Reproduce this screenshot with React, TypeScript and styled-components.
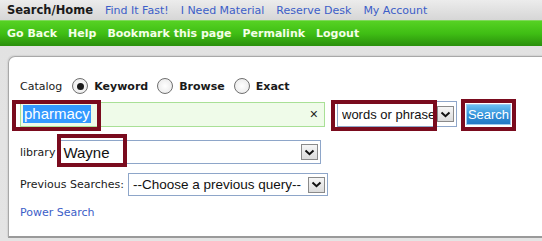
import React from 'react';
import styled, { createGlobalStyle } from 'styled-components';

const GlobalStyle = createGlobalStyle`
  html, body {
    margin: 0;
    padding: 0;
    background: #ffffff;
    overflow: hidden;
  }
  body {
    font-family: "DejaVu Sans", Verdana, sans-serif;
  }
`;

const Page = styled.div`
  width: 542px;
  height: 241px;
  overflow: hidden;
  background: linear-gradient(#e9e9e9, #e2e2e2 40px, #e4e4e4);
`;

const TopBar = styled.div`
  display: flex;
  align-items: center;
  gap: 12px;
  height: 20px;
  padding-left: 7px;
  background: linear-gradient(#ececec, #d6d6d6);
  font-size: 11px;
`;

const TopLink = styled.a<{ $active?: boolean }>`
  color: ${(p) => (p.$active ? '#1a1a1a' : '#3c5ec8')};
  font-weight: ${(p) => (p.$active ? 'bold' : 'normal')};
  font-size: ${(p) => (p.$active ? '11.5px' : '11px')};
  text-decoration: none;
`;

const GreenBar = styled.div`
  display: flex;
  align-items: center;
  gap: 11px;
  height: 26px;
  padding-left: 7px;
  background: linear-gradient(#56d223, #3fbe14 50%, #2a8f0c);
  border-top: 1px solid #7ed85a;
  box-sizing: border-box;
`;

const GreenLink = styled.a`
  color: #f4ffe6;
  font-weight: bold;
  font-size: 11px;
  text-decoration: none;
`;

const Panel = styled.div`
  position: relative;
  margin: 10px 0 0 8px;
  width: 560px;
  height: 182px;
  box-sizing: border-box;
  background: #ffffff;
  border: 1px solid #a8a8a8;
  border-bottom: 2px solid #9a9a9a;
  border-radius: 7px 0 0 0;
  box-shadow: -1px -1px 1px #d4d4d4;
  padding: 21px 0 0 11px;
  font-size: 11px;
  color: #1a1a1a;
`;

const Row = styled.div<{ $top?: number; $left?: number }>`
  display: flex;
  align-items: center;
  margin-top: ${(p) => p.$top ?? 0}px;
  margin-left: ${(p) => p.$left ?? 0}px;
`;

const Label = styled.span<{ $right?: number }>`
  margin-right: ${(p) => p.$right ?? 0}px;
`;

const Radio = styled.span<{ $checked?: boolean }>`
  position: relative;
  width: 14px;
  height: 14px;
  border-radius: 50%;
  border: 1px solid #6f6f6f;
  background: radial-gradient(#ffffff, #e6e6e6);
  margin-right: 6px;
  flex: none;
  &::after {
    content: '';
    display: ${(p) => (p.$checked ? 'block' : 'none')};
    position: absolute;
    left: 3.5px;
    top: 3.5px;
    width: 7px;
    height: 7px;
    border-radius: 50%;
    background: #1a1a1a;
  }
`;

const RadioLabel = styled.span`
  font-weight: bold;
  font-size: 11px;
  margin-right: 9px;
`;

const SearchInput = styled.div`
  position: relative;
  display: flex;
  align-items: center;
  width: 305px;
  height: 25px;
  box-sizing: border-box;
  border: 1px solid #a9e096;
  background: #effbe9;
  padding-left: 2px;
  font-family: "Liberation Sans", Arial, sans-serif;
  font-size: 15px;
`;

const Selected = styled.span`
  background: #3399ff;
  color: #ffffff;
  padding: 0 1px;
  line-height: 18px;
`;

const Clear = styled.span`
  margin-left: auto;
  margin-right: 6px;
  font-size: 14px;
  color: #222;
`;

const Select = styled.div<{ $width: number; $height: number; $size: number }>`
  position: relative;
  display: flex;
  align-items: center;
  width: ${(p) => p.$width}px;
  height: ${(p) => p.$height}px;
  box-sizing: border-box;
  border: 1px solid #8ea6c9;
  background: #ffffff;
  padding-left: 4px;
  padding-right: 2px;
  font-family: "Liberation Sans", Arial, sans-serif;
  font-size: ${(p) => p.$size}px;
  color: #111;
  flex: none;
`;

const SelectText = styled.span`
  flex: 1;
  white-space: nowrap;
  overflow: hidden;
`;

const Arrow = styled.span`
  display: flex;
  align-items: center;
  justify-content: center;
  width: 17px;
  height: 16px;
  box-sizing: border-box;
  border: 1px solid #8a8a8a;
  background: linear-gradient(#f6f6f6, #dcdcdc);
  flex: none;
`;

const SearchButton = styled.span`
  display: flex;
  align-items: center;
  justify-content: center;
  width: 45px;
  height: 21px;
  box-sizing: border-box;
  border: 1px solid #9ccbf0;
  background: linear-gradient(#6cc0f2, #2f8fd8 55%, #2378c4);
  color: #ffffff;
  font-family: "Liberation Sans", Arial, sans-serif;
  font-size: 13px;
`;

const Highlight = styled.span`
  position: absolute;
  border: 4px solid #7a0b1e;
  box-sizing: border-box;
  pointer-events: none;
`;

const PowerLink = styled.a`
  color: #3c5ec8;
  text-decoration: none;
  font-size: 11px;
`;

function Chevron(): JSX.Element {
  return (
    <svg width="11" height="7" viewBox="0 0 11 7">
      <path d="M1.5 1.5 L5.5 5.2 L9.5 1.5" fill="none" stroke="#111" strokeWidth="2" />
    </svg>
  );
}

export default function App(): JSX.Element {
  return (
    <Page>
      <GlobalStyle />
      <TopBar>
        <TopLink $active>Search/Home</TopLink>
        <TopLink>Find It Fast!</TopLink>
        <TopLink>I Need Material</TopLink>
        <TopLink>Reserve Desk</TopLink>
        <TopLink>My Account</TopLink>
      </TopBar>
      <GreenBar>
        <GreenLink>Go Back</GreenLink>
        <GreenLink>Help</GreenLink>
        <GreenLink>Bookmark this page</GreenLink>
        <GreenLink>Permalink</GreenLink>
        <GreenLink>Logout</GreenLink>
      </GreenBar>
      <Panel>
        <Row>
          <Label $right={10}>Catalog</Label>
          <Radio $checked />
          <RadioLabel>Keyword</RadioLabel>
          <Radio />
          <RadioLabel>Browse</RadioLabel>
          <Radio />
          <RadioLabel>Exact</RadioLabel>
        </Row>
        <Row $top={7}>
          <SearchInput>
            <Selected>pharmacy</Selected>
            <Clear>×</Clear>
          </SearchInput>
          <Row $left={12}>
            <Select $width={120} $height={26} $size={13}>
              <SelectText>words or phrase</SelectText>
              <Arrow>
                <Chevron />
              </Arrow>
            </Select>
          </Row>
          <Row $left={9}>
            <SearchButton>Search</SearchButton>
          </Row>
        </Row>
        <Row $top={13}>
          <Label $right={3}>library</Label>
          <Select $width={263} $height={24} $size={15}>
            <SelectText>Wayne</SelectText>
            <Arrow>
              <Chevron />
            </Arrow>
          </Select>
        </Row>
        <Row $top={9}>
          <Label $right={4}>Previous Searches:</Label>
          <Select $width={200} $height={23} $size={13.5}>
            <SelectText>--Choose a previous query--</SelectText>
            <Arrow>
              <Chevron />
            </Arrow>
          </Select>
        </Row>
        <Row $top={10}>
          <PowerLink>Power Search</PowerLink>
        </Row>
        <Highlight style={{ left: 3, top: 43, width: 89, height: 31 }} />
        <Highlight style={{ left: 322, top: 43, width: 106, height: 31 }} />
        <Highlight style={{ left: 452, top: 42, width: 55, height: 32 }} />
        <Highlight style={{ left: 48, top: 77, width: 70, height: 33 }} />
      </Panel>
    </Page>
  );
}
